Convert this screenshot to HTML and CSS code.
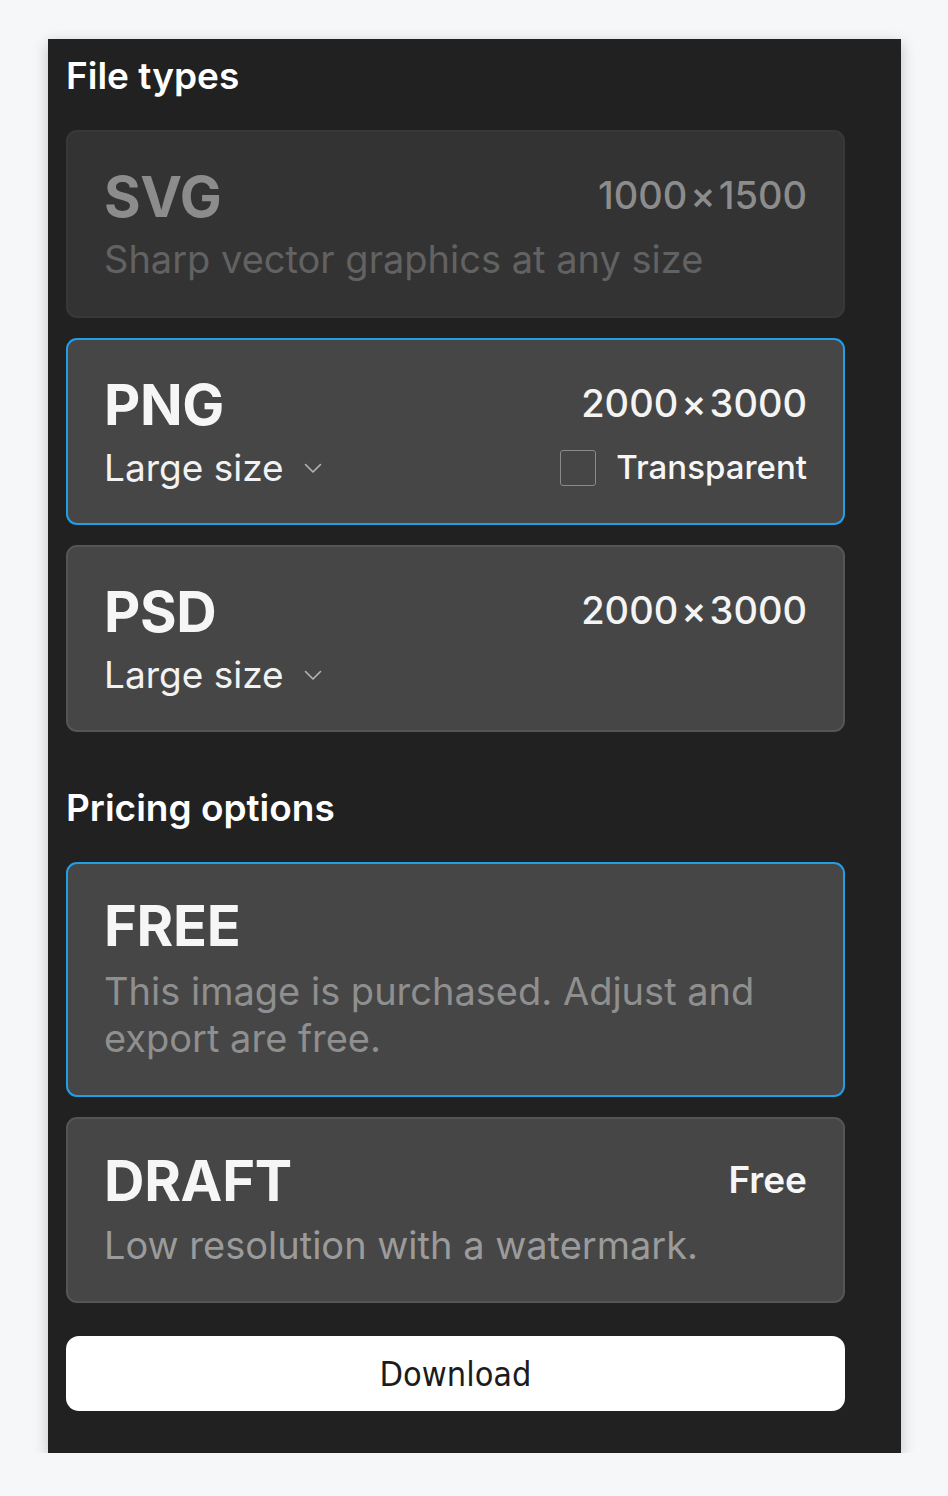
FILE: index.html
```html
<!DOCTYPE html>
<html lang="en">
<head>
<meta charset="utf-8">
<title>Export</title>
<link rel="stylesheet" href="styles.css">
</head>
<body>
<div class="panel">
  <h2 class="heading">File types</h2>
  <div class="cards">
    <div class="card card-disabled">
      <div class="row-top">
        <div class="title">SVG</div>
        <div class="dims">1000<span class="times">×</span>1500</div>
      </div>
      <div class="desc">Sharp vector graphics at any size</div>
    </div>
    <div class="card card-selected">
      <div class="row-top">
        <div class="title">PNG</div>
        <div class="dims">2000<span class="times">×</span>3000</div>
      </div>
      <div class="row-bottom">
        <div class="select">Large size
          <svg class="chev" width="18" height="11" viewBox="0 0 18 11"><path d="M1.5 1.5 L9 9 L16.5 1.5" fill="none" stroke="#b5b5b5" stroke-width="1.6" stroke-linecap="round" stroke-linejoin="round"/></svg>
        </div>
        <label class="check"><span class="box"></span>Transparent</label>
      </div>
    </div>
    <div class="card">
      <div class="row-top">
        <div class="title">PSD</div>
        <div class="dims">2000<span class="times">×</span>3000</div>
      </div>
      <div class="row-bottom">
        <div class="select">Large size
          <svg class="chev" width="18" height="11" viewBox="0 0 18 11"><path d="M1.5 1.5 L9 9 L16.5 1.5" fill="none" stroke="#b5b5b5" stroke-width="1.6" stroke-linecap="round" stroke-linejoin="round"/></svg>
        </div>
      </div>
    </div>
  </div>

  <h2 class="heading heading-second">Pricing options</h2>
  <div class="cards">
    <div class="card card-selected card-price">
      <div class="row-top">
        <div class="title">FREE</div>
      </div>
      <div class="desc desc-price">This image is purchased. Adjust and export are free.</div>
    </div>
    <div class="card card-price">
      <div class="row-top">
        <div class="title">DRAFT</div>
        <div class="price">Free</div>
      </div>
      <div class="desc desc-draft">Low resolution with a watermark.</div>
    </div>
  </div>

  <button class="download">Download</button>
</div>
</body>
</html>
```

FILE: styles.css
```css
html, body {
  margin: 0;
  padding: 0;
  background: #f6f7f9;
}

body {
  font-family: Inter, "Noto Sans", "Liberation Sans", sans-serif;
  padding: 39px 0 0 48px;
}

.panel {
  width: 853px;
  box-sizing: border-box;
  background: #212121;
  padding: 15px 56px 42px 18px;
  box-shadow: 0 4px 14px rgba(0, 0, 0, 0.22);
}

.heading {
  margin: 0 0 32px 0;
  font-size: 37px;
  line-height: 44px;
  font-weight: 600;
  color: #ffffff;
}

.heading-second {
  margin-top: 54px;
}

.cards {
  display: flex;
  flex-direction: column;
  gap: 20px;
}

.card {
  background: #464646;
  border: 2px solid #555555;
  border-radius: 11px;
  padding: 31px 36px 33px 36px;
  display: flex;
  flex-direction: column;
  gap: 6px;
}

.card-price {
  padding-top: 28px;
  padding-bottom: 33px;
  gap: 8px;
}

.card-selected {
  border: 2px solid #239ee6;
}

.card-disabled {
  background: #333333;
  border-color: #383838;
  padding-bottom: 34px;
}

.row-top {
  display: flex;
  justify-content: space-between;
  align-items: flex-start;
}

.row-bottom {
  display: flex;
  justify-content: space-between;
  align-items: center;
  height: 45px;
}

.title {
  font-size: 56px;
  line-height: 68px;
  font-weight: 700;
  color: #f6f6f6;
  letter-spacing: -0.3px;
}

.dims {
  margin-top: 8px;
  font-size: 38px;
  line-height: 48px;
  font-weight: 500;
  color: #f4f4f4;
}

.times {
  margin: 0 3px;
}

.price {
  margin-top: 11px;
  font-size: 37px;
  line-height: 44px;
  font-weight: 600;
  color: #f6f6f6;
}

.card-disabled .title,
.card-disabled .dims {
  color: #8c8c8c;
}

.desc {
  font-size: 38px;
  line-height: 45px;
  color: #626262;
}

.desc-price {
  color: #8f8f8f;
  line-height: 47px;
}

.desc-draft {
  color: #9b9b9b;
}

.select {
  display: flex;
  align-items: center;
  gap: 20px;
  font-size: 37px;
  line-height: 45px;
  color: #f2f2f2;
}

.chev {
  display: block;
  margin-top: 2px;
}

.check {
  display: flex;
  align-items: center;
  gap: 20px;
  font-size: 33px;
  line-height: 45px;
  font-weight: 500;
  color: #f6f6f6;
}

.box {
  display: block;
  width: 34px;
  height: 34px;
  border: 1px solid #8a8a8a;
  border-radius: 3px;
  box-sizing: content-box;
}

.download {
  display: block;
  width: 100%;
  height: 75px;
  margin-top: 33px;
  background: #ffffff;
  border: none;
  border-radius: 13px;
  font-family: "Liberation Sans Narrow", "DejaVu Sans Condensed", "Liberation Sans", sans-serif;
  font-size: 34px;
  color: #1c1c1c;
  padding: 0;
}
```
